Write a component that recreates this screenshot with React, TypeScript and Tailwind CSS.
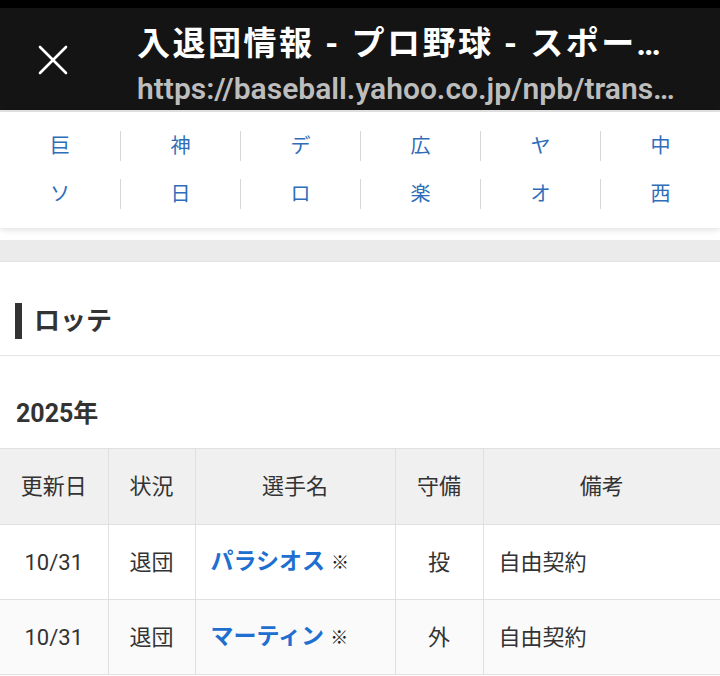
const teams = [
  ["巨", "神", "デ", "広", "ヤ", "中"],
  ["ソ", "日", "ロ", "楽", "オ", "西"],
];

const rows = [
  { date: "10/31", status: "退団", name: "パラシオス", pos: "投", note: "自由契約" },
  { date: "10/31", status: "退団", name: "マーティン", pos: "外", note: "自由契約" },
];

const font = "font-['Roboto','Noto_Sans_CJK_JP',sans-serif]";

export default function App() {
  return (
    <div className={`h-[676px] w-[720px] overflow-hidden bg-white ${font}`}>
      <div className="h-2 bg-black" />
      <header className="flex h-[104px] bg-[#141414] border-b-2 border-[#e4e4e4]">
        <div className="flex w-[137px] shrink-0 items-center justify-center pr-[32px]">
          <svg width="30" height="30" viewBox="0 0 30 30" className="mb-[-2px]">
            <path d="M2 2 L28 28 M28 2 L2 28" stroke="#fff" strokeWidth="2.6" strokeLinecap="round" />
          </svg>
        </div>
        <div className="min-w-0 flex-1 pr-[43px] pt-[17px]">
          <div className="truncate text-[33px] font-bold leading-[38px] tracking-[2.5px] text-white">
            入退団情報 - プロ野球 - スポーツナビ
          </div>
          <div className="mt-[8px] truncate text-[30px] font-semibold leading-[36px] text-[#bdbdbd]">
            https://baseball.yahoo.co.jp/npb/transaction/
          </div>
        </div>
      </header>

      <nav className="relative bg-white pt-[19px] pb-[19px] shadow-[0_2px_6px_rgba(0,0,0,0.12)]">
        {teams.map((row, i) => (
          <div key={i} className={`grid grid-cols-6 ${i === 1 ? "mt-[18px]" : ""}`}>
            {row.map((t, j) => (
              <div
                key={t}
                className={`flex h-[30px] items-center justify-center text-[20px] text-[#2e6db9] ${j > 0 ? "border-l border-[#d6d6d6]" : ""}`}
              >
                {t}
              </div>
            ))}
          </div>
        ))}
      </nav>

      <div className="mt-[12px] h-[22px] border-b border-[#e4e4e4] bg-[#ebebeb]" />

      <section className="flex h-[94px] items-center border-b border-[#e6e6e6] pl-[15px] pt-[24px]">
        <span className="h-[36px] w-[7px] bg-[#333]" />
        <h2 className="ml-[12px] text-[26px] font-bold leading-none text-[#333]">ロッテ</h2>
      </section>

      <div className="flex h-[92px] items-center pl-[16px] pt-[24px]">
        <h3 className="text-[25px] font-bold text-[#333]">2025年</h3>
      </div>

      <table className="w-[720px] table-fixed border-collapse text-[22px] text-[#333]">
        <colgroup>
          <col className="w-[108px]" />
          <col className="w-[87px]" />
          <col className="w-[200px]" />
          <col className="w-[88px]" />
          <col />
        </colgroup>
        <thead>
          <tr className="h-[76px] bg-[#f0f0f0]">
            {["更新日", "状況", "選手名", "守備", "備考"].map((h, i) => (
              <th
                key={h}
                className={`border-y border-[#e0e0e0] font-normal ${i > 0 ? "border-l" : ""}`}
              >
                {h}
              </th>
            ))}
          </tr>
        </thead>
        <tbody>
          {rows.map((r, i) => (
            <tr key={r.name} className={`h-[75px] ${i % 2 ? "bg-[#fafafa]" : "bg-white"}`}>
              <td className="border-b border-[#e0e0e0] text-center">{r.date}</td>
              <td className="border-b border-l border-[#e0e0e0] text-center">{r.status}</td>
              <td className="border-b border-l border-[#e0e0e0] pl-[15px]">
                <span className="text-[23px] font-bold text-[#1f6fd0]">{r.name}</span>
                <span className="ml-[6px] font-['Noto_Sans_CJK_JP',sans-serif] text-[18px] font-black text-[#222]">※</span>
              </td>
              <td className="border-b border-l border-[#e0e0e0] text-center">{r.pos}</td>
              <td className="border-b border-l border-[#e0e0e0] pl-[15px]">{r.note}</td>
            </tr>
          ))}
        </tbody>
      </table>
    </div>
  );
}
